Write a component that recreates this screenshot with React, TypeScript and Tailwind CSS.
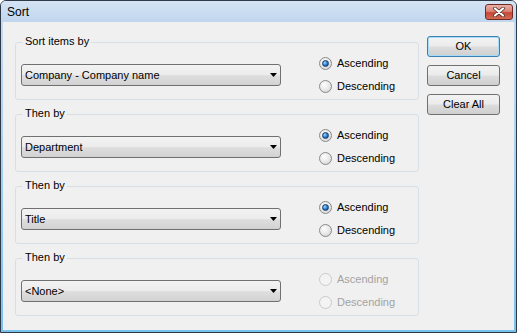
import React from 'react';

const comboBg =
  'bg-[linear-gradient(to_bottom,#f3f3f3_0%,#ececec_48%,#dfdfdf_52%,#d2d2d2_100%)]';
const buttonBg =
  'bg-[linear-gradient(to_bottom,#f3f3f3_0%,#ebebeb_48%,#dddddd_52%,#cfcfcf_100%)]';

function Combo({ value }: { value: string }) {
  return (
    <div className={`flex h-[22px] w-[260px] items-center justify-between rounded-[3px] border border-[#707070] pl-[3px] pr-[3px] ${comboBg}`}>
      <span>{value}</span>
      <svg width="7" height="4" viewBox="0 0 7 4">
        <path d="M0 0h7L3.5 4z" fill="#000" />
      </svg>
    </div>
  );
}

function Radio({ checked, disabled, label }: { checked?: boolean; disabled?: boolean; label: string }) {
  return (
    <div className="flex h-[23px] items-center gap-[5px]">
      <span
        className={`flex h-[13px] w-[13px] items-center justify-center rounded-full border ${
          disabled
            ? 'border-[#cacaca] bg-[#f3f3f3]'
            : 'border-[#8a8a8a] bg-[radial-gradient(circle_at_40%_35%,#ffffff_0%,#e6e6e6_55%,#c8c8c8_100%)]'
        }`}
      >
        {checked && (
          <span className="h-[7px] w-[7px] rounded-full border border-[#123e6e] bg-[radial-gradient(circle_at_35%_35%,#9fd8ff_0%,#2c7fcf_50%,#0c3d75_100%)]" />
        )}
      </span>
      <span className={disabled ? 'text-[#a3a3a3]' : 'text-black'}>{label}</span>
    </div>
  );
}

function Group({ title, value, order, disabled }: { title: string; value: string; order?: 'asc' | 'desc'; disabled?: boolean }) {
  return (
    <div className="relative flex h-[58px] w-[404px] rounded-[3px] border border-[#d5dfe5]">
      <span className="absolute -top-[8px] left-[7px] bg-[#f0f0f0] px-[2px] leading-[13px]">{title}</span>
      <div className="ml-[5px] mt-[21px]">
        <Combo value={value} />
      </div>
      <div className="ml-[38px] mt-[9px] flex flex-col">
        <Radio checked={order === 'asc'} disabled={disabled} label="Ascending" />
        <Radio checked={order === 'desc'} disabled={disabled} label="Descending" />
      </div>
    </div>
  );
}

function Button({ label, isDefault }: { label: string; isDefault?: boolean }) {
  return (
    <button
      className={`h-[21px] w-[73px] rounded-[3px] border leading-[13px] ${buttonBg} ${
        isDefault ? 'border-[#3c7fb1] shadow-[inset_0_0_0_1px_#a7dcf6]' : 'border-[#707070]'
      }`}
    >
      {label}
    </button>
  );
}

export default function App() {
  return (
    <div className="flex h-[333px] w-[517px] flex-col overflow-hidden rounded-t-[6px] border border-[#2e3a48] bg-[linear-gradient(to_bottom,#c9dcf2,#aed2f0_40%,#78c2ee)] font-['Liberation_Sans',Arial,sans-serif] text-[11px] text-black">
      {/* Title bar */}
      <div className="flex h-[21px] shrink-0 items-start justify-between bg-[linear-gradient(to_bottom,#d4e3f4,#c0d6ee)] pl-[6px] pr-[3px]">
        <span className="mt-[4px] text-[12px] leading-[14px]">Sort</span>
        <div className="mt-[3px] flex h-[16px] w-[28px] items-center justify-center rounded-[3px] border border-[#6e2b24] bg-[linear-gradient(to_bottom,#eab0a6_0%,#dc8476_45%,#c74636_55%,#d36a52_100%)]">
          <svg width="12" height="10" viewBox="0 0 12 10">
            <path d="M2 1.5l8 7M10 1.5l-8 7" stroke="#3a2a28" strokeWidth="3.6" strokeLinecap="round" />
            <path d="M2 1.5l8 7M10 1.5l-8 7" stroke="#ffffff" strokeWidth="2.2" strokeLinecap="round" />
          </svg>
        </div>
      </div>

      {/* Client area */}
      <div className="mx-[2px] mb-[2px] flex flex-1 gap-[8px] bg-[#f0f0f0] pl-[12px]">
        <div className="mt-[20px] flex flex-col gap-[14px]">
          <Group title="Sort items by" value="Company - Company name" order="asc" />
          <Group title="Then by" value="Department" order="asc" />
          <Group title="Then by" value="Title" order="asc" />
          <Group title="Then by" value="<None>" disabled />
        </div>
        <div className="mt-[14px] flex flex-col gap-[8px]">
          <Button label="OK" isDefault />
          <Button label="Cancel" />
          <Button label="Clear All" />
        </div>
      </div>
    </div>
  );
}
